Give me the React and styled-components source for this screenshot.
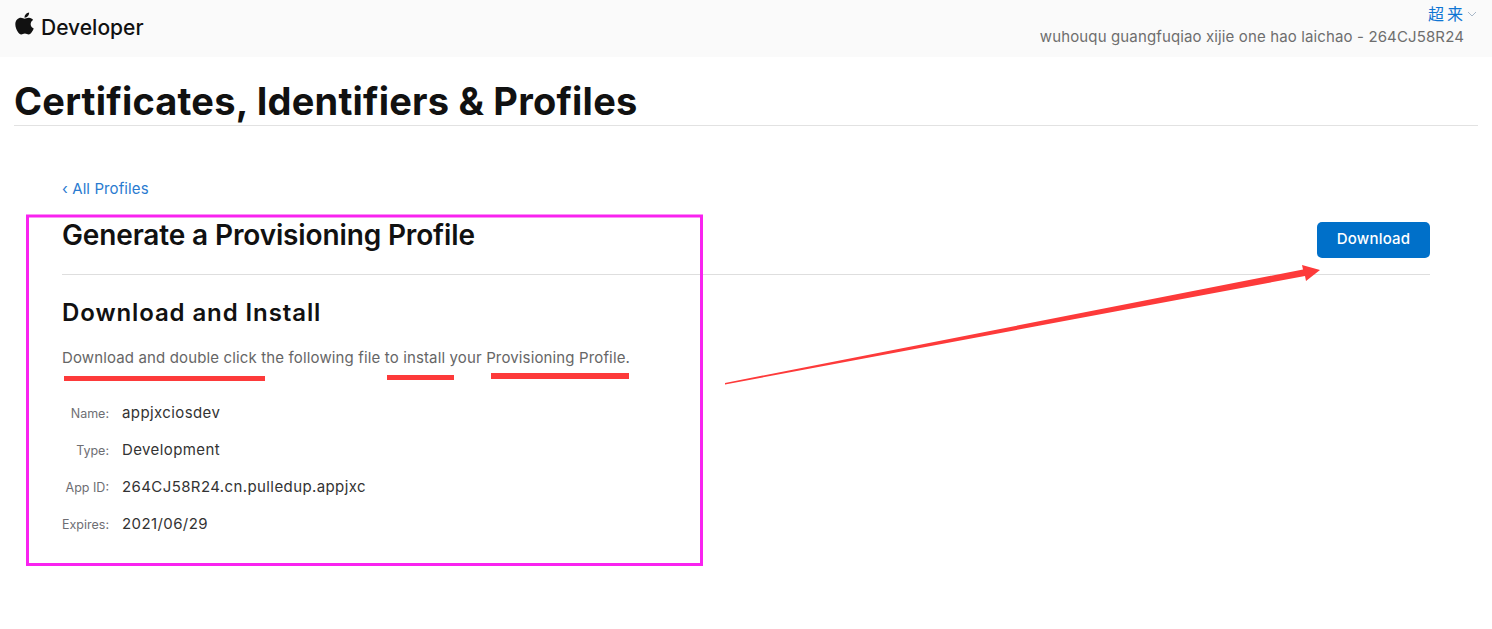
import React from "react";
import styled, { createGlobalStyle } from "styled-components";
import { FaApple } from "react-icons/fa";

const Global = createGlobalStyle`
  html, body { margin: 0; padding: 0; background: #fff; }
  body { font-family: Inter, "Noto Sans CJK SC", sans-serif; overflow: hidden; }
`;

const Page = styled.div`
  position: relative;
  width: 1492px;
  height: 629px;
  overflow: hidden;
`;

const TopBar = styled.header`
  height: 57px;
  background: #fafafa;
  display: flex;
  justify-content: space-between;
  padding: 0 28px 0 12px;
  box-sizing: border-box;
`;

const Brand = styled.div`
  display: flex;
  align-items: flex-start;
  gap: 4px;
  padding-top: 11px;
  color: #111;
`;

const BrandName = styled.span`
  margin-top: 2px;
  font-size: 21px;
  line-height: 30px;
  font-weight: 500;
  color: #111;
`;

const Account = styled.div`
  display: flex;
  flex-direction: column;
  align-items: flex-end;
  padding-top: 4px;
`;

const UserMenu = styled.div`
  display: flex;
  align-items: center;
  gap: 1px;
  margin-right: -13px;
  font-size: 16px;
  line-height: 20px;
  letter-spacing: 3px;
  color: #0f75d3;
`;

const TeamName = styled.div`
  margin-top: 3px;
  font-size: 15px;
  line-height: 20px;
  letter-spacing: 0.13px;
  color: #6e6e6e;
`;

const Title = styled.h1`
  margin: 0 14px;
  padding: 20px 0 0;
  height: 48px;
  font-size: 38px;
  line-height: 49px;
  font-weight: 700;
  letter-spacing: 0.21px;
  color: #111;
  border-bottom: 1px solid #e2e2e2;
`;

const Main = styled.main`
  padding: 53px 62px 0;
`;

const BackLink = styled.a`
  display: block;
  font-size: 15px;
  line-height: 20px;
  letter-spacing: 0.1px;
  color: #2a7bd0;
`;

const HeadRow = styled.div`
  display: flex;
  justify-content: space-between;
  align-items: flex-start;
  height: 58px;
  margin-top: 17px;
  border-bottom: 1px solid #dedede;
`;

const PageHeading = styled.h2`
  margin: 0;
  font-size: 28px;
  line-height: 38px;
  font-weight: 600;
  letter-spacing: -0.14px;
  color: #111;
`;

const DownloadButton = styled.button`
  width: 113px;
  height: 36px;
  margin-top: 6px;
  padding: 0 0 4px;
  border: 0;
  border-radius: 5px;
  background: #0070c9;
  color: #fff;
  font: 500 15px Inter, sans-serif;
  letter-spacing: 0.2px;
`;

const SectionHeading = styled.h3`
  margin: 21px 0 0;
  font-size: 24px;
  line-height: 34px;
  font-weight: 600;
  letter-spacing: 0.9px;
  color: #111;
`;

const Lead = styled.p`
  margin: 17px 0 0;
  font-size: 15px;
  line-height: 22px;
  letter-spacing: 0.14px;
  color: #666;
`;

const Details = styled.dl`
  display: grid;
  grid-template-columns: 47px 1fr;
  column-gap: 13px;
  row-gap: 14px;
  margin: 33px 0 0;
`;

const Label = styled.dt`
  font-size: 12.5px;
  line-height: 22px;
  text-align: right;
  color: #6e6e73;
  white-space: nowrap;
  padding-top: 1px;
`;

const Value = styled.dd`
  margin: 0;
  font-size: 15px;
  line-height: 22px;
  letter-spacing: 0.4px;
  color: #333;
`;

const Annotations = styled.svg`
  position: absolute;
  left: 0;
  top: 0;
  pointer-events: none;
`;

const rows = [
  ["Name:", "appjxciosdev"],
  ["Type:", "Development"],
  ["App ID:", "264CJ58R24.cn.pulledup.appjxc"],
  ["Expires:", "2021/06/29"],
];

export default function App() {
  return (
    <Page>
      <Global />
      <TopBar>
        <Brand>
          <FaApple size={25} />
          <BrandName>Developer</BrandName>
        </Brand>
        <Account>
          <UserMenu>
            超来
            <svg width="10" height="6" viewBox="0 0 10 6" fill="none" stroke="#a9b8c8" strokeWidth="1">
              <path d="M1 1l4 4 4-4" />
            </svg>
          </UserMenu>
          <TeamName>wuhouqu guangfuqiao xijie one hao laichao - 264CJ58R24</TeamName>
        </Account>
      </TopBar>
      <Title>Certificates, Identifiers &amp; Profiles</Title>
      <Main>
        <BackLink>‹ All Profiles</BackLink>
        <HeadRow>
          <PageHeading>Generate a Provisioning Profile</PageHeading>
          <DownloadButton>Download</DownloadButton>
        </HeadRow>
        <SectionHeading>Download and Install</SectionHeading>
        <Lead>Download and double click the following file to install your Provisioning Profile.</Lead>
        <Details>
          {rows.map(([k, v]) => (
            <React.Fragment key={k}>
              <Label>{k}</Label>
              <Value>{v}</Value>
            </React.Fragment>
          ))}
        </Details>
      </Main>
      <Annotations width="1492" height="629" viewBox="0 0 1492 629">
        <rect x="27.5" y="216" width="674" height="348.5" fill="none" stroke="#f923f0" strokeWidth="3" />
        <rect x="64" y="376" width="201" height="5" fill="#fd3a3a" />
        <rect x="387" y="375" width="67" height="5" fill="#fd3a3a" />
        <rect x="491" y="373" width="138" height="6" fill="#fd3a3a" />
        <path d="M725 383 L1303 269.5 L1302 265 L1320 270 L1306 281 L1305 276 L725 384.5 Z" fill="#fd3a3a" />
      </Annotations>
    </Page>
  );
}
